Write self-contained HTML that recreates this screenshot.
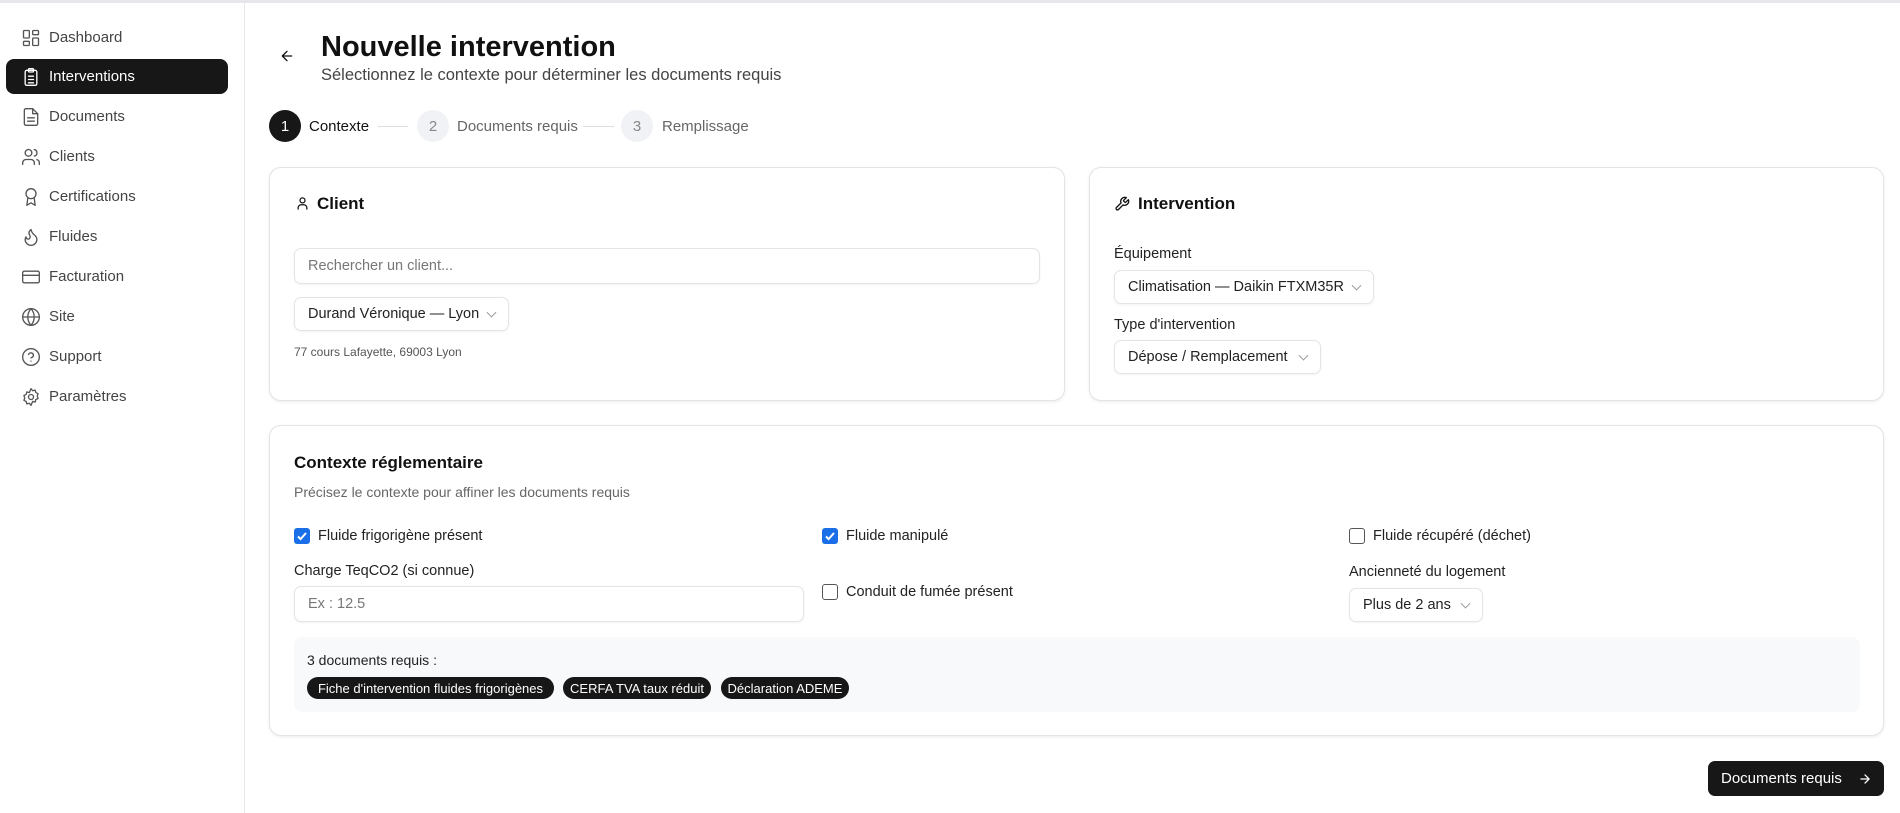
<!DOCTYPE html>
<html><head><meta charset="utf-8"><style>
*{box-sizing:border-box;margin:0;padding:0}
body{width:1900px;height:813px;background:#fff;font-family:"Liberation Sans",Arial,sans-serif;color:#111;position:relative;overflow:hidden}
.a{position:absolute}
.top{left:0;top:0;width:1900px;height:3px;background:#e5e7eb}
.side{left:0;top:3px;width:245px;height:810px;border-right:1px solid #e5e7eb}
.nav{position:absolute;left:6px;width:222px;height:35px;border-radius:8px;display:flex;align-items:center;font-size:15px;color:#444}
.nav svg{position:absolute;left:15px;width:20px;height:20px;fill:none;stroke:#555;stroke-width:1.6;stroke-linecap:round;stroke-linejoin:round}
.nav span{position:absolute;left:43px}
.nav.on{background:#171717;color:#fff}
.nav.on svg{stroke:#fff}
.card{border:1px solid #e2e4e8;border-radius:12px;box-shadow:0 1px 3px rgba(0,0,0,.08);background:#fff}
.inp{border:1px solid #e2e4e8;border-radius:7px;box-shadow:0 1px 2px rgba(0,0,0,.05);font-size:14.5px;display:flex;align-items:center;padding-left:13px;color:#222}
.inp.ph{color:#777}
.chev{position:absolute;right:13px;top:50%;width:7px;height:7px;border-right:1.3px solid #999;border-bottom:1.3px solid #999;transform:translateY(-70%) rotate(45deg)}
.lbl{font-size:14.5px;color:#222}
.cb{width:16px;height:16px;border-radius:3px}
.cb.on{background:#1a6fe8}
.cb.off{border:1.3px solid #555;background:#fff}
.badge{background:#171717;color:#fff;font-size:13px;height:22px;border-radius:11px;display:flex;align-items:center;justify-content:center}
.step{width:32px;height:32px;border-radius:50%;display:flex;align-items:center;justify-content:center;font-size:15px}
</style></head><body>
<div class="a top"></div>
<div class="a side">
 <div class="nav" style="top:17px"><svg viewBox="0 0 24 24"><rect x="3" y="3" width="7" height="9" rx="1"/><rect x="14" y="3" width="7" height="5" rx="1"/><rect x="14" y="12" width="7" height="9" rx="1"/><rect x="3" y="16" width="7" height="5" rx="1"/></svg><span>Dashboard</span></div>
 <div class="nav on" style="top:56px"><svg viewBox="0 0 24 24"><rect x="5" y="4" width="14" height="18" rx="2"/><rect x="9" y="2" width="6" height="4" rx="1"/><path d="M9 11h6M9 15h6M9 19h6"/></svg><span>Interventions</span></div>
 <div class="nav" style="top:96px"><svg viewBox="0 0 24 24"><path d="M14 2H6a2 2 0 0 0-2 2v16a2 2 0 0 0 2 2h12a2 2 0 0 0 2-2V8z"/><path d="M14 2v6h6M8 13h8M8 17h8"/></svg><span>Documents</span></div>
 <div class="nav" style="top:136px"><svg viewBox="0 0 24 24"><circle cx="9" cy="7" r="4"/><path d="M2 21v-2a4 4 0 0 1 4-4h6a4 4 0 0 1 4 4v2M16 3.1a4 4 0 0 1 0 7.8M22 21v-2a4 4 0 0 0-3-3.9"/></svg><span>Clients</span></div>
 <div class="nav" style="top:176px"><svg viewBox="0 0 24 24"><circle cx="12" cy="8" r="6"/><path d="M8.2 13L7 22l5-3 5 3-1.2-9"/></svg><span>Certifications</span></div>
 <div class="nav" style="top:216px"><svg viewBox="0 0 24 24"><path d="M8.5 14.5A2.5 2.5 0 0 0 11 12c0-1.4-.5-2-1-3-1.1-2.1-.2-4.1 2-6 .5 2.5 2 4.9 4 6.5 2 1.6 3 3.5 3 5.5a7 7 0 1 1-14 0c0-1.2.4-2.3 1-3.2.3 1.8 1.3 2.7 2.5 2.7z"/></svg><span>Fluides</span></div>
 <div class="nav" style="top:256px"><svg viewBox="0 0 24 24"><rect x="2" y="5" width="20" height="14" rx="2"/><path d="M2 10h20"/></svg><span>Facturation</span></div>
 <div class="nav" style="top:296px"><svg viewBox="0 0 24 24"><circle cx="12" cy="12" r="10"/><path d="M2 12h20M12 2a15 15 0 0 1 0 20M12 2a15 15 0 0 0 0 20"/></svg><span>Site</span></div>
 <div class="nav" style="top:336px"><svg viewBox="0 0 24 24"><circle cx="12" cy="12" r="10"/><path d="M9.1 9a3 3 0 0 1 5.8 1c0 2-3 3-3 3M12 17h.01"/></svg><span>Support</span></div>
 <div class="nav" style="top:376px"><svg viewBox="0 0 24 24"><circle cx="12" cy="12" r="3"/><path d="M12 2l2 2.5 3-.8.8 3 2.7 1.3-1 2.9 1 2.9-2.7 1.3-.8 3-3-.8L12 22l-2-2.5-3 .8-.8-3L3.5 16l1-2.9-1-2.9 2.7-1.3.8-3 3 .8z"/></svg><span>Paramètres</span></div>
</div>

<svg class="a" style="left:279px;top:48px" width="16" height="16" viewBox="0 0 24 24" fill="none" stroke="#111" stroke-width="2" stroke-linecap="round" stroke-linejoin="round"><path d="M19 12H5M12 19l-7-7 7-7"/></svg>
<div class="a" style="left:321px;top:31px;font-size:29px;font-weight:bold;color:#111">Nouvelle intervention</div>
<div class="a" style="left:321px;top:66px;font-size:16.5px;color:#444">Sélectionnez le contexte pour déterminer les documents requis</div>

<div class="a step" style="left:269px;top:110px;background:#171717;color:#fff">1</div>
<div class="a" style="left:309px;top:118px;font-size:15px;color:#111">Contexte</div>
<div class="a" style="left:378px;top:126px;width:30px;height:1px;background:#ddd"></div>
<div class="a step" style="left:417px;top:110px;background:#f0f2f5;color:#888">2</div>
<div class="a" style="left:457px;top:118px;font-size:15px;color:#666">Documents requis</div>
<div class="a" style="left:583px;top:126px;width:31px;height:1px;background:#ddd"></div>
<div class="a step" style="left:621px;top:110px;background:#f0f2f5;color:#888">3</div>
<div class="a" style="left:662px;top:118px;font-size:15px;color:#666">Remplissage</div>

<div class="a card" style="left:269px;top:167px;width:796px;height:234px"></div>
<svg class="a" style="left:295px;top:196px" width="15" height="15" viewBox="0 0 24 24" fill="none" stroke="#111" stroke-width="2" stroke-linecap="round"><circle cx="12" cy="7" r="4"/><path d="M5 21v-2a5 5 0 0 1 5-5h4a5 5 0 0 1 5 5v2"/></svg>
<div class="a" style="left:317px;top:194px;font-size:17px;font-weight:bold">Client</div>
<div class="a inp ph" style="left:294px;top:248px;width:746px;height:36px">Rechercher un client...</div>
<div class="a inp" style="left:294px;top:297px;width:215px;height:34px">Durand Véronique — Lyon<i class="chev"></i></div>
<div class="a" style="left:294px;top:345px;font-size:12px;color:#555">77 cours Lafayette, 69003 Lyon</div>

<div class="a card" style="left:1089px;top:167px;width:795px;height:234px"></div>
<svg class="a" style="left:1114px;top:196px" width="16" height="16" viewBox="0 0 24 24" fill="none" stroke="#111" stroke-width="2" stroke-linecap="round" stroke-linejoin="round"><path d="M14.7 6.3a1 1 0 0 0 0 1.4l1.6 1.6a1 1 0 0 0 1.4 0l3.8-3.8a6 6 0 0 1-7.9 7.9l-6.9 6.9a2.1 2.1 0 0 1-3-3l6.9-6.9a6 6 0 0 1 7.9-7.9z"/></svg>
<div class="a" style="left:1138px;top:194px;font-size:17px;font-weight:bold">Intervention</div>
<div class="a lbl" style="left:1114px;top:246px">Équipement</div>
<div class="a inp" style="left:1114px;top:270px;width:260px;height:34px">Climatisation — Daikin FTXM35R<i class="chev"></i></div>
<div class="a lbl" style="left:1114px;top:317px">Type d'intervention</div>
<div class="a inp" style="left:1114px;top:340px;width:207px;height:34px">Dépose / Remplacement<i class="chev"></i></div>

<div class="a card" style="left:269px;top:425px;width:1615px;height:311px"></div>
<div class="a" style="left:294px;top:453px;font-size:17px;font-weight:bold">Contexte réglementaire</div>
<div class="a" style="left:294px;top:484px;font-size:14px;color:#666">Précisez le contexte pour affiner les documents requis</div>

<div class="a cb on" style="left:294px;top:528px"><svg width="16" height="16" viewBox="0 0 16 16"><path d="M4 8.5l2.6 2.6L12 5" fill="none" stroke="#fff" stroke-width="2"/></svg></div>
<div class="a lbl" style="left:318px;top:528px">Fluide frigorigène présent</div>
<div class="a cb on" style="left:822px;top:528px"><svg width="16" height="16" viewBox="0 0 16 16"><path d="M4 8.5l2.6 2.6L12 5" fill="none" stroke="#fff" stroke-width="2"/></svg></div>
<div class="a lbl" style="left:846px;top:528px">Fluide manipulé</div>
<div class="a cb off" style="left:1349px;top:528px"></div>
<div class="a lbl" style="left:1373px;top:528px">Fluide récupéré (déchet)</div>

<div class="a lbl" style="left:294px;top:563px">Charge TeqCO2 (si connue)</div>
<div class="a inp ph" style="left:294px;top:586px;width:510px;height:36px">Ex : 12.5</div>
<div class="a cb off" style="left:822px;top:584px"></div>
<div class="a lbl" style="left:846px;top:584px">Conduit de fumée présent</div>
<div class="a lbl" style="left:1349px;top:564px">Ancienneté du logement</div>
<div class="a inp" style="left:1349px;top:588px;width:134px;height:34px">Plus de 2 ans<i class="chev"></i></div>

<div class="a" style="left:294px;top:637px;width:1566px;height:75px;background:#f8f9fb;border-radius:8px"></div>
<div class="a" style="left:307px;top:652px;font-size:14px;color:#222">3 documents requis :</div>
<div class="a badge" style="left:307px;top:677px;width:247px">Fiche d'intervention fluides frigorigènes</div>
<div class="a badge" style="left:563px;top:677px;width:148px">CERFA TVA taux réduit</div>
<div class="a badge" style="left:721px;top:677px;width:128px">Déclaration ADEME</div>

<div class="a" style="left:1708px;top:761px;width:176px;height:35px;background:#171717;border-radius:7px;color:#fff;font-size:15px;display:flex;align-items:center;padding-left:13px">Documents requis
<svg style="position:absolute;right:12px;top:11px" width="14" height="14" viewBox="0 0 24 24" fill="none" stroke="#fff" stroke-width="2.2" stroke-linecap="round" stroke-linejoin="round"><path d="M5 12h14M12 5l7 7-7 7"/></svg></div>
</body></html>
